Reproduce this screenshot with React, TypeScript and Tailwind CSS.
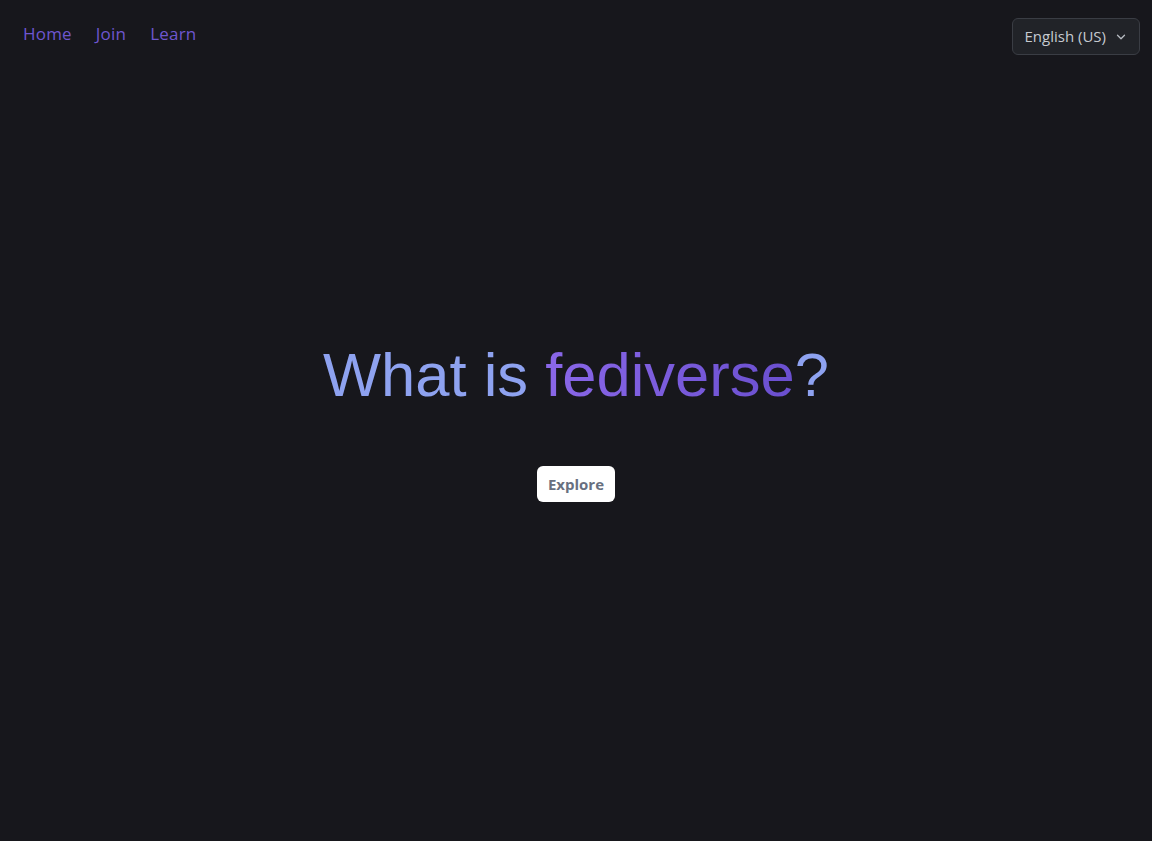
import { ChevronDown } from "lucide-react";

const navLinks = ["Home", "Join", "Learn"];

const App = () => {
  return (
    <div className="min-h-screen w-full bg-[#17171c] flex flex-col font-['Open_Sans','Noto_Sans',sans-serif]">
      <header className="flex items-start justify-between pl-[23px] pr-3 pt-[18px]">
        <nav className="flex gap-[24px] pt-[4px]">
          {navLinks.map((link) => (
            <a
              key={link}
              href="#"
              className="text-[17px] leading-[24px] tracking-[0.2px] text-[#6e56cf] hover:underline"
            >
              {link}
            </a>
          ))}
        </nav>
        <button className="flex items-center gap-[8px] h-[37px] pl-[11px] pr-[11px] rounded-md border border-[#3a3d44] bg-[#212328] text-[15px] text-[#c6cad0]">
          English (US)
          <ChevronDown className="size-[14px] text-[#b7bbc2]" strokeWidth={2.2} />
        </button>
      </header>

      <main className="flex flex-col items-center pt-[285px]">
        <h1 className="font-['Liberation_Sans',Arial,sans-serif] text-[61.5px] leading-[70px] text-[#8ea2f0]">
          What is{" "}
          <span className="bg-gradient-to-r from-[#8a67e8] to-[#6a4fcf] bg-clip-text text-transparent">
            fediverse
          </span>
          ?
        </h1>
        <button className="mt-[56px] h-[36px] px-[11px] rounded-md bg-white text-[15px] font-bold text-[#687080]">
          Explore
        </button>
      </main>
    </div>
  );
};

export default App;
